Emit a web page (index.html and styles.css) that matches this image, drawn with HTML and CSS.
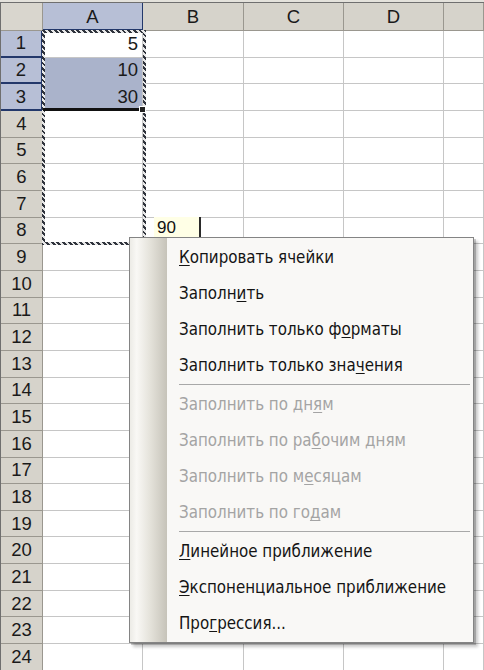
FILE: index.html
```html
<!DOCTYPE html>
<html lang="ru">
<head>
<meta charset="utf-8">
<title>Автозаполнение</title>
<link rel="stylesheet" href="styles.css">
</head>
<body>
<div class="wrap">
  <div class="sheet">
    <div class="h corner"></div>
    <div class="h col sel-col">A</div>
    <div class="h col">B</div>
    <div class="h col">C</div>
    <div class="h col">D</div>
    <div class="h col"></div>

    <div class="h row sel-row">1</div><div class="c active num">5</div><div class="c"></div><div class="c"></div><div class="c"></div><div class="c"></div>
    <div class="h row sel-row">2</div><div class="c sel num">10</div><div class="c"></div><div class="c"></div><div class="c"></div><div class="c"></div>
    <div class="h row sel-row">3</div><div class="c sel num">30</div><div class="c"></div><div class="c"></div><div class="c"></div><div class="c"></div>
    <div class="h row">4</div><div class="c"></div><div class="c"></div><div class="c"></div><div class="c"></div><div class="c"></div>
    <div class="h row">5</div><div class="c"></div><div class="c"></div><div class="c"></div><div class="c"></div><div class="c"></div>
    <div class="h row">6</div><div class="c"></div><div class="c"></div><div class="c"></div><div class="c"></div><div class="c"></div>
    <div class="h row">7</div><div class="c"></div><div class="c"></div><div class="c"></div><div class="c"></div><div class="c"></div>
    <div class="h row">8</div><div class="c"></div><div class="c"></div><div class="c"></div><div class="c"></div><div class="c"></div>
    <div class="h row">9</div><div class="c"></div><div class="c"></div><div class="c"></div><div class="c"></div><div class="c"></div>
    <div class="h row">10</div><div class="c"></div><div class="c"></div><div class="c"></div><div class="c"></div><div class="c"></div>
    <div class="h row">11</div><div class="c"></div><div class="c"></div><div class="c"></div><div class="c"></div><div class="c"></div>
    <div class="h row">12</div><div class="c"></div><div class="c"></div><div class="c"></div><div class="c"></div><div class="c"></div>
    <div class="h row">13</div><div class="c"></div><div class="c"></div><div class="c"></div><div class="c"></div><div class="c"></div>
    <div class="h row">14</div><div class="c"></div><div class="c"></div><div class="c"></div><div class="c"></div><div class="c"></div>
    <div class="h row">15</div><div class="c"></div><div class="c"></div><div class="c"></div><div class="c"></div><div class="c"></div>
    <div class="h row">16</div><div class="c"></div><div class="c"></div><div class="c"></div><div class="c"></div><div class="c"></div>
    <div class="h row">17</div><div class="c"></div><div class="c"></div><div class="c"></div><div class="c"></div><div class="c"></div>
    <div class="h row">18</div><div class="c"></div><div class="c"></div><div class="c"></div><div class="c"></div><div class="c"></div>
    <div class="h row">19</div><div class="c"></div><div class="c"></div><div class="c"></div><div class="c"></div><div class="c"></div>
    <div class="h row">20</div><div class="c"></div><div class="c"></div><div class="c"></div><div class="c"></div><div class="c"></div>
    <div class="h row">21</div><div class="c"></div><div class="c"></div><div class="c"></div><div class="c"></div><div class="c"></div>
    <div class="h row">22</div><div class="c"></div><div class="c"></div><div class="c"></div><div class="c"></div><div class="c"></div>
    <div class="h row">23</div><div class="c"></div><div class="c"></div><div class="c"></div><div class="c"></div><div class="c"></div>
    <div class="h row">24</div><div class="c"></div><div class="c"></div><div class="c"></div><div class="c"></div><div class="c"></div>
  </div>

  <div class="ants"></div>
  <div class="fill-bar"></div>
  <div class="fill-handle"></div>
  <div class="tip">90</div>

  <div class="menu">
    <div class="item"><u>К</u>опировать ячейки</div>
    <div class="item">Заполн<u>и</u>ть</div>
    <div class="item">Заполнить только ф<u>о</u>рматы</div>
    <div class="item">Заполнить только зна<u>ч</u>ения</div>
    <div class="sep"></div>
    <div class="item off">Заполнить по дн<u>я</u>м</div>
    <div class="item off">Заполнить по ра<u>б</u>очим дням</div>
    <div class="item off">Заполнить по м<u>е</u>сяцам</div>
    <div class="item off">Заполнить по го<u>д</u>ам</div>
    <div class="sep"></div>
    <div class="item"><u>Л</u>инейное приближение</div>
    <div class="item"><u>Э</u>кспоненциальное приближение</div>
    <div class="item">Про<u>г</u>рессия...</div>
  </div>
</div>
</body>
</html>
```

FILE: styles.css
```css
* { box-sizing: border-box; }

html, body {
  margin: 0;
  padding: 0;
  background: #ffffff;
  overflow: hidden;
}

.wrap {
  position: relative;
  width: 484px;
  height: 670px;
  padding-top: 2px;
  background: #e4e2dc;
}

.sheet {
  display: grid;
  grid-template-columns: 42px 100px 101px 100px 100px 1fr;
  grid-template-rows: 28px repeat(24, 26.6667px);
  border-top: 1px solid #6f6f6f;
  border-left: 1px solid #6f6f6f;
  background: #ffffff;
  font-family: "Liberation Sans", Arial, sans-serif;
  font-size: 18.5px;
  color: #1a1a1a;
}

.h {
  background: #d6d3cb;
  border-right: 1px solid #9a978f;
  border-bottom: 1px solid #9a978f;
  display: flex;
  align-items: center;
  justify-content: center;
}

.corner { background: #d9d6ce; }

.col { padding-top: 1px; }

.sel-col {
  background: #b7bfd6;
  border-bottom: 2px solid #23386b;
  border-right: 1px solid #23386b;
}

.sel-row {
  background: #b7bfd6;
  border-right: 2px solid #23386b;
  border-bottom: 2px solid #23386b;
}

.c {
  border-right: 1px solid #c6c6c6;
  border-bottom: 1px solid #c6c6c6;
  background: #ffffff;
}

.num {
  display: flex;
  align-items: center;
  justify-content: flex-end;
  padding-right: 4px;
}

.sel { background: #aab3cb; border-bottom-color: #aab3cb; }

.ants {
  position: absolute;
  left: 42px;
  top: 30px;
  width: 104px;
  height: 215px;
  border: 3px solid transparent;
  border-image: repeating-linear-gradient(45deg, #2f333c 0 2px, #e8e8e8 2px 4px) 3;
}

.fill-bar {
  position: absolute;
  left: 43px;
  top: 108px;
  width: 98px;
  height: 3px;
  background: #111111;
}

.fill-handle {
  position: absolute;
  left: 139px;
  top: 106px;
  width: 7px;
  height: 7px;
  background: #222222;
  border: 1px solid #ffffff;
}

.tip {
  position: absolute;
  left: 154px;
  top: 217px;
  width: 47px;
  height: 22px;
  background: #ffffe6;
  border-right: 2px solid #2a2a2a;
  font-family: "Liberation Sans", Arial, sans-serif;
  font-size: 17px;
  line-height: 22px;
  padding-left: 3px;
  color: #111;
}

.menu {
  position: absolute;
  left: 129px;
  top: 237px;
  width: 345px;
  padding: 1px 0;
  border: 1px solid #848484;
  background:
    linear-gradient(to right, #ecebe6 0%, #f9f8f5 18%, #e4e2da 55%, #c6c3b9 100%) 0 0 / 37px 100% no-repeat,
    #f9f8f6;
  box-shadow: 2px 2px 0 rgba(0,0,0,0.18), 4px 4px 3px rgba(0,0,0,0.22);
  font-family: "DejaVu Sans Condensed", "Liberation Sans", sans-serif;
  font-size: 16.8px;
  color: #141414;
}

.item {
  height: 36px;
  line-height: 36px;
  padding-left: 49px;
  white-space: nowrap;
}

.item u { text-underline-offset: 2px; }

.off { color: #a4a4a4; }

.sep {
  height: 3px;
  margin: 0 3px 0 49px;
  border-top: 1px solid #a8a8a8;
  transform: translateY(1px);
}
```
